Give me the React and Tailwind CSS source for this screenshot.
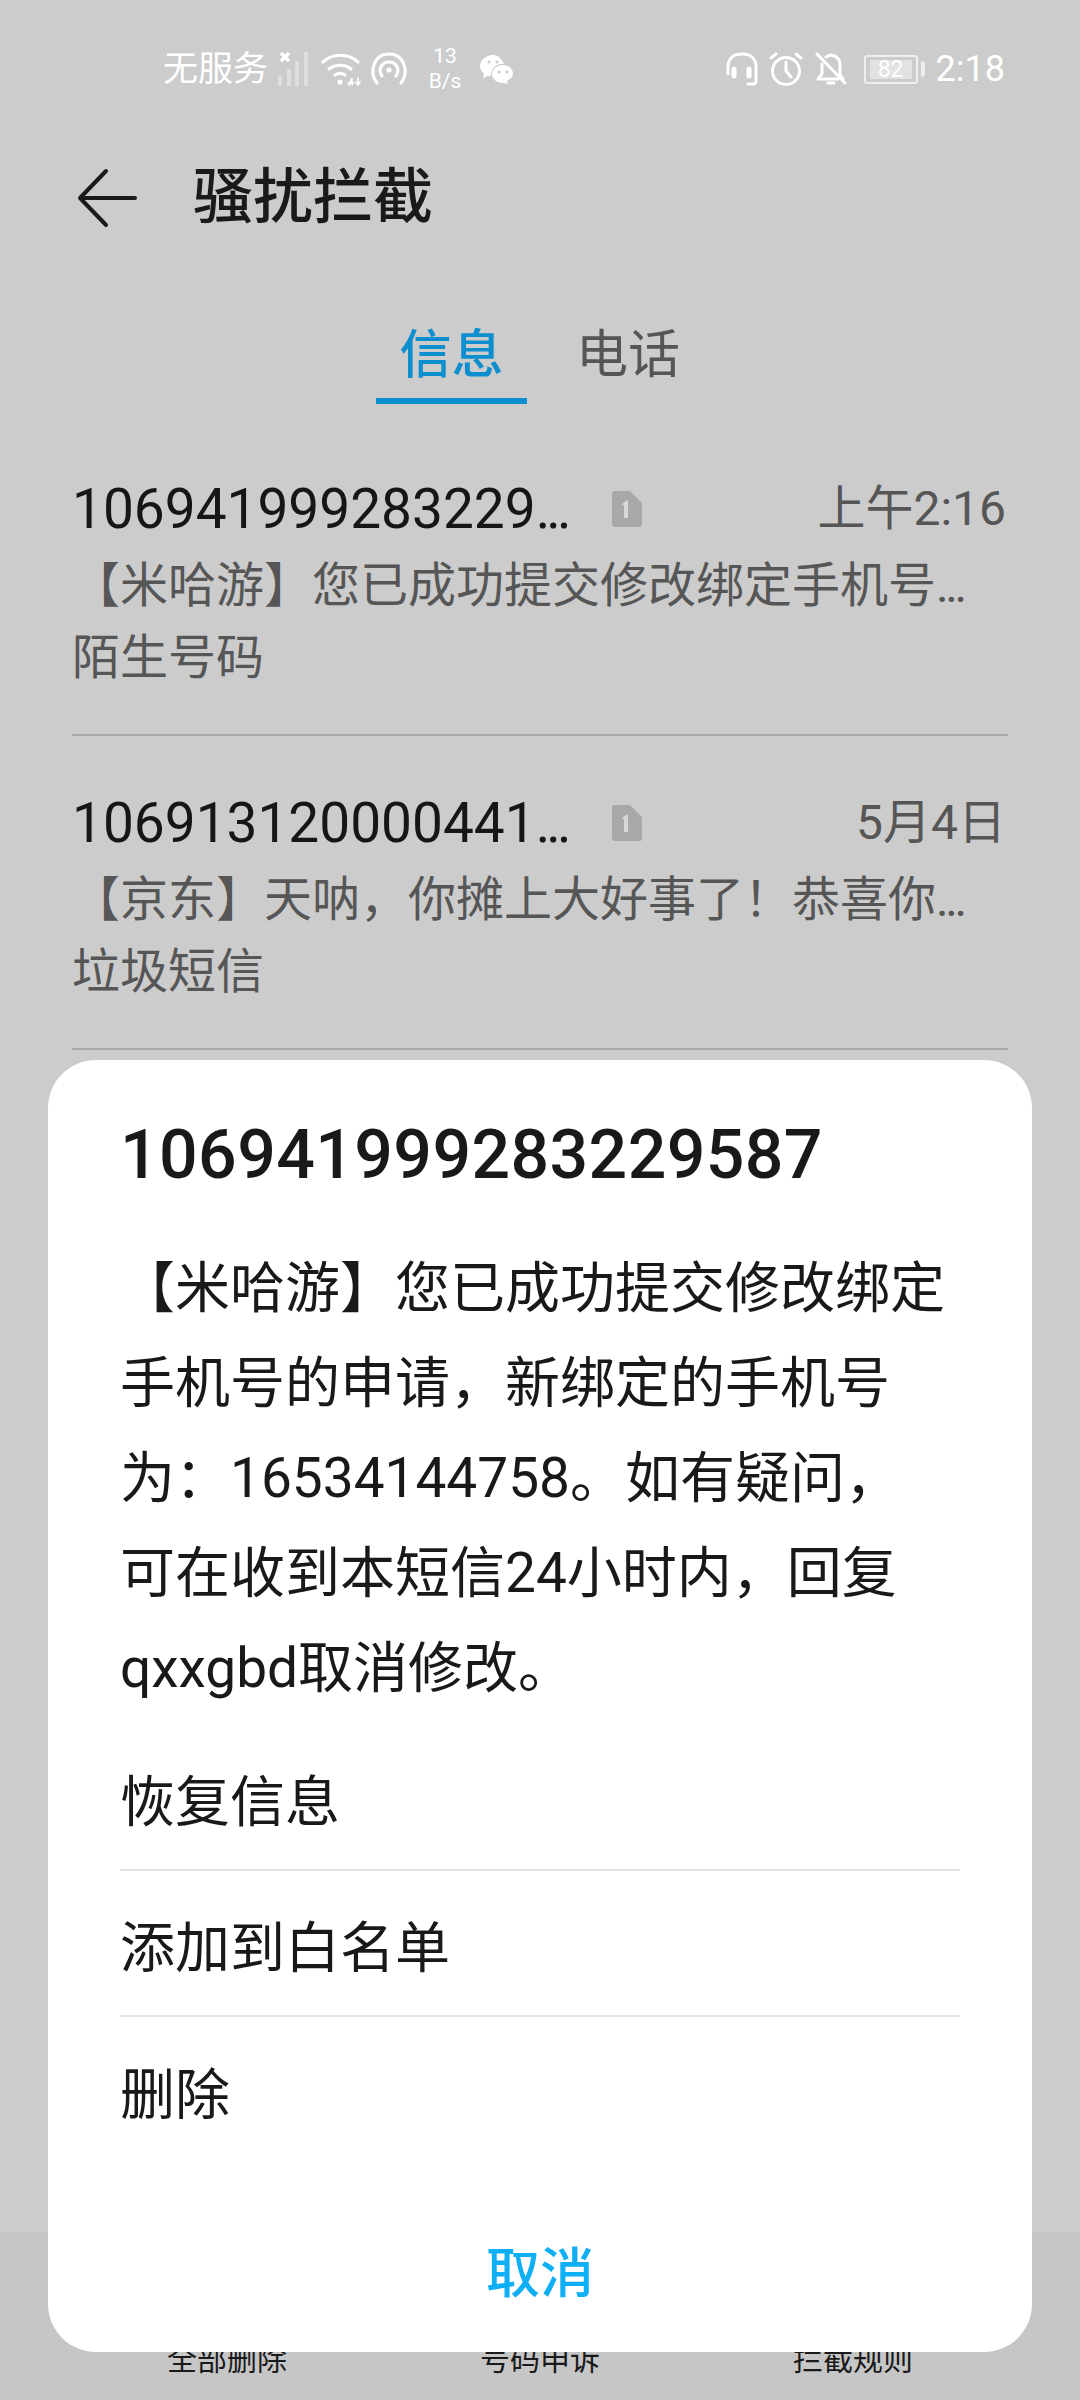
import React from "react";

const font = "font-['Roboto','Noto_Sans_CJK_SC',sans-serif]";

const messages = [
  { number: "106941999283229", time: "上午2:16", preview: "【米哈游】您已成功提交修改绑定手机号", tag: "陌生号码" },
  { number: "106913120000441", time: "5月4日", preview: "【京东】天呐，你摊上大好事了！恭喜你", tag: "垃圾短信" },
];

const bodyLines = [
  "【米哈游】您已成功提交修改绑定",
  "手机号的申请，新绑定的手机号",
  "为：16534144758。如有疑问，",
  "可在收到本短信24小时内，回复",
  "qxxgbd取消修改。",
];

const Signal = () => (
  <svg width="36" height="40" viewBox="0 0 36 40" fill="none">
    <path d="M3 4l8 8M11 4l-8 8" stroke="#fff" strokeWidth="3.5" />
    <g fill="#fff" fillOpacity="0.35">
      <rect x="0" y="27" width="4" height="10" />
      <rect x="9" y="20" width="4" height="17" />
      <rect x="17" y="12" width="4" height="25" />
      <rect x="26" y="3" width="4" height="34" />
    </g>
  </svg>
);

const Wifi = () => (
  <svg width="40" height="34" viewBox="0 0 40 34" fill="none" stroke="#fff" strokeWidth="3.2" strokeLinecap="round">
    <path d="M2 10C12 1 27 1 37 10" />
    <path d="M8 17c7-5 16-5 22 0" />
    <path d="M14 23c3-2 7-2 10 0" />
    <circle cx="19" cy="30" r="2.6" fill="#fff" stroke="none" />
    <path d="M28 33l3-7v7M27 31h6M37 26v7M35 30l2 3 2-3" strokeWidth="1.6" />
  </svg>
);

const Hotspot = () => (
  <svg width="38" height="34" viewBox="0 0 38 34" fill="none" stroke="#fff" strokeWidth="3.2" strokeLinecap="round">
    <path d="M7 31C-1 21 3 2 19 2s20 19 12 29" />
    <path d="M12 24c-4-6-1-14 7-14s11 8 7 14" />
    <circle cx="19" cy="18" r="2.6" fill="#fff" stroke="none" />
  </svg>
);

const Wechat = () => (
  <svg width="34" height="30" viewBox="0 0 34 30">
    <path d="M13 1C6 1 0 6 0 12c0 3 2 6 4 8l-1 4 5-2 3 .5C10 16 15 10 22 10h2C22 5 18 1 13 1z" fill="#fff" />
    <path d="M23 11c-6 0-11 4-11 9s5 9 11 9l5 1-1-3c3-2 6-4 6-7 0-5-4-9-10-9z" fill="#fff" />
    <g fill="#ccc">
      <circle cx="9" cy="8" r="1.6" />
      <circle cx="17" cy="8" r="1.6" />
      <circle cx="19" cy="18" r="1.5" />
      <circle cx="27" cy="18" r="1.5" />
    </g>
  </svg>
);

const Headset = () => (
  <svg width="32" height="34" viewBox="0 0 32 34" fill="none" stroke="#fff" strokeWidth="3" strokeLinecap="round">
    <path d="M2 22V15C2 6 8 2 16 2s14 4 14 13v14c0 2-1 3-3 3h-5" />
    <path d="M8 17v7M23 17v7" strokeWidth="5" />
  </svg>
);

const Alarm = () => (
  <svg width="36" height="34" viewBox="0 0 36 34" fill="none" stroke="#fff" strokeWidth="3" strokeLinecap="round">
    <circle cx="18" cy="19" r="13.5" />
    <path d="M18 10v9l5 6M3 6l5-4M33 6l-5-4" />
  </svg>
);

const BellOff = () => (
  <svg width="32" height="34" viewBox="0 0 32 34" fill="none" stroke="#fff" strokeWidth="3" strokeLinecap="round" strokeLinejoin="round">
    <path d="M7 12v10l-4 5h20M11 5c2-1 3-2 5-2 6 1 9 5 9 10v10l3 4" />
    <path d="M13 31h6M2 2l28 29" />
  </svg>
);

const Battery = () => (
  <div className="ml-[17px] flex items-center">
    <div className="flex h-[29px] w-[54px] items-center justify-center rounded-[3px] border-2 border-[#eeeeee] p-[3px]">
      <div className="flex h-full w-[42px] items-center justify-center bg-[#e2e2e2] text-[23px] leading-none text-white">82</div>
    </div>
    <div className="ml-[3px] h-[16px] w-[4px] rounded-r-sm bg-[#eeeeee]" />
  </div>
);

const StatusBar = () => (
  <div className="flex h-[46px] items-center pl-[163px] pr-[75px] text-white">
    <span className="w-[115px] text-[35px] leading-none">无服务</span>
    <Signal />
    <div className="ml-[7px]"><Wifi /></div>
    <div className="ml-[9px]"><Hotspot /></div>
    <div className="ml-[17px] w-[40px] text-center text-[21px] leading-[25px]">13<br />B/s</div>
    <div className="ml-[15px]"><Wechat /></div>
    <div className="ml-auto flex items-center">
      <Headset />
      <div className="ml-[10px]"><Alarm /></div>
      <div className="ml-[11px]"><BellOff /></div>
      <Battery />
      <span className="ml-[11px] text-[36px] leading-none">2:18</span>
    </div>
  </div>
);

const Header = () => (
  <div className="mt-[71px] flex h-[70px] items-center pl-[77px]">
    <svg width="60" height="60" viewBox="0 0 60 60" fill="none" stroke="#1a1a1a" strokeWidth="4" strokeLinecap="round" strokeLinejoin="round">
      <path d="M29 3L3 30l26 27M4 30h54" />
    </svg>
    <h1 className="ml-[56px] text-[60px] font-medium leading-none text-[#1a1a1a]">骚扰拦截</h1>
  </div>
);

const Tabs = () => (
  <div className="mt-[93px] flex pl-[376px]">
    <div className="h-[78px] w-[151px] border-b-[6px] border-[#0d8fcf] pt-[4px] text-center text-[52px] font-medium leading-none text-[#0d8fcf]">信息</div>
    <div className="ml-[49px] pt-[4px] text-[52px] leading-none text-[#555555]">电话</div>
  </div>
);

const SimIcon = () => (
  <svg width="30" height="36" viewBox="0 0 30 36">
    <path d="M3 0h15l12 12v21a3 3 0 0 1-3 3H3a3 3 0 0 1-3-3V3a3 3 0 0 1 3-3z" fill="#a8a8a8" />
    <path d="M11 12l5-3v18h-4V14l-2 1z" fill="#d8d8d8" />
  </svg>
);

const Dots = () => <span className="tracking-[-0.07em]">...</span>;

const MessageRow = ({ number, time, preview, tag }) => (
  <div className="mx-[72px] flex h-[314px] flex-col justify-end border-b-2 border-[#ababab] pb-[40px]">
    <div className="flex items-center">
      <span className="w-[540px] whitespace-nowrap text-[55px] leading-[70px] text-[#161616]">{number}<Dots /></span>
      <SimIcon />
      <span className="ml-auto pr-[2px] text-[48px] leading-[70px] text-[#565656]">{time}</span>
    </div>
    <div className="mt-[6px] whitespace-nowrap text-[48px] leading-[72px] text-[#565656]">{preview}<Dots /></div>
    <div className="whitespace-nowrap text-[48px] leading-[72px] text-[#565656]">{tag}</div>
  </div>
);

const BottomBar = () => (
  <div className="absolute inset-x-0 bottom-0 flex h-[168px] items-end bg-[#c6c6c6] pb-[22px] text-[30px] leading-[36px] text-[#1a1a1a]">
    <span className="w-[454px] text-center">全部删除</span>
    <span className="w-[172px] text-center">号码申诉</span>
    <span className="w-[454px] text-center">拦截规则</span>
  </div>
);

const ActionRow = ({ label, divider }) => (
  <div className={`flex h-[146px] items-center pt-[10px] text-[55px] leading-none text-[#191919] ${divider ? "border-b-2 border-[#e3e3e3]" : ""}`}>
    {label}
  </div>
);

const Dialog = () => (
  <div className="absolute left-[48px] top-[1060px] h-[1292px] w-[984px] rounded-[48px] bg-white px-[72px] pt-[60px]">
    <h2 className="text-[68px] font-medium leading-[70px] tracking-[0.4px] text-[#191919]">106941999283229587</h2>
    <div className="mt-[51px] text-[55px] leading-[95px] text-[#191919]">
      {bodyLines.map((line) => (
        <div key={line} className="whitespace-nowrap">{line}</div>
      ))}
    </div>
    <div className="mt-[9px]">
      <ActionRow label="恢复信息" divider />
      <ActionRow label="添加到白名单" divider />
      <ActionRow label="删除" />
    </div>
    <div className="mt-[85px] text-center text-[54px] font-medium leading-none text-[#0faff5]">取消</div>
  </div>
);

const App = () => (
  <div className={`relative h-[2400px] w-[1080px] overflow-hidden bg-[#cccccc] pt-[46px] ${font}`}>
    <StatusBar />
    <Header />
    <Tabs />
    <div className="mt-[18px]">
      {messages.map((m) => (
        <MessageRow key={m.number} {...m} />
      ))}
    </div>
    <BottomBar />
    <Dialog />
  </div>
);

export default App;
